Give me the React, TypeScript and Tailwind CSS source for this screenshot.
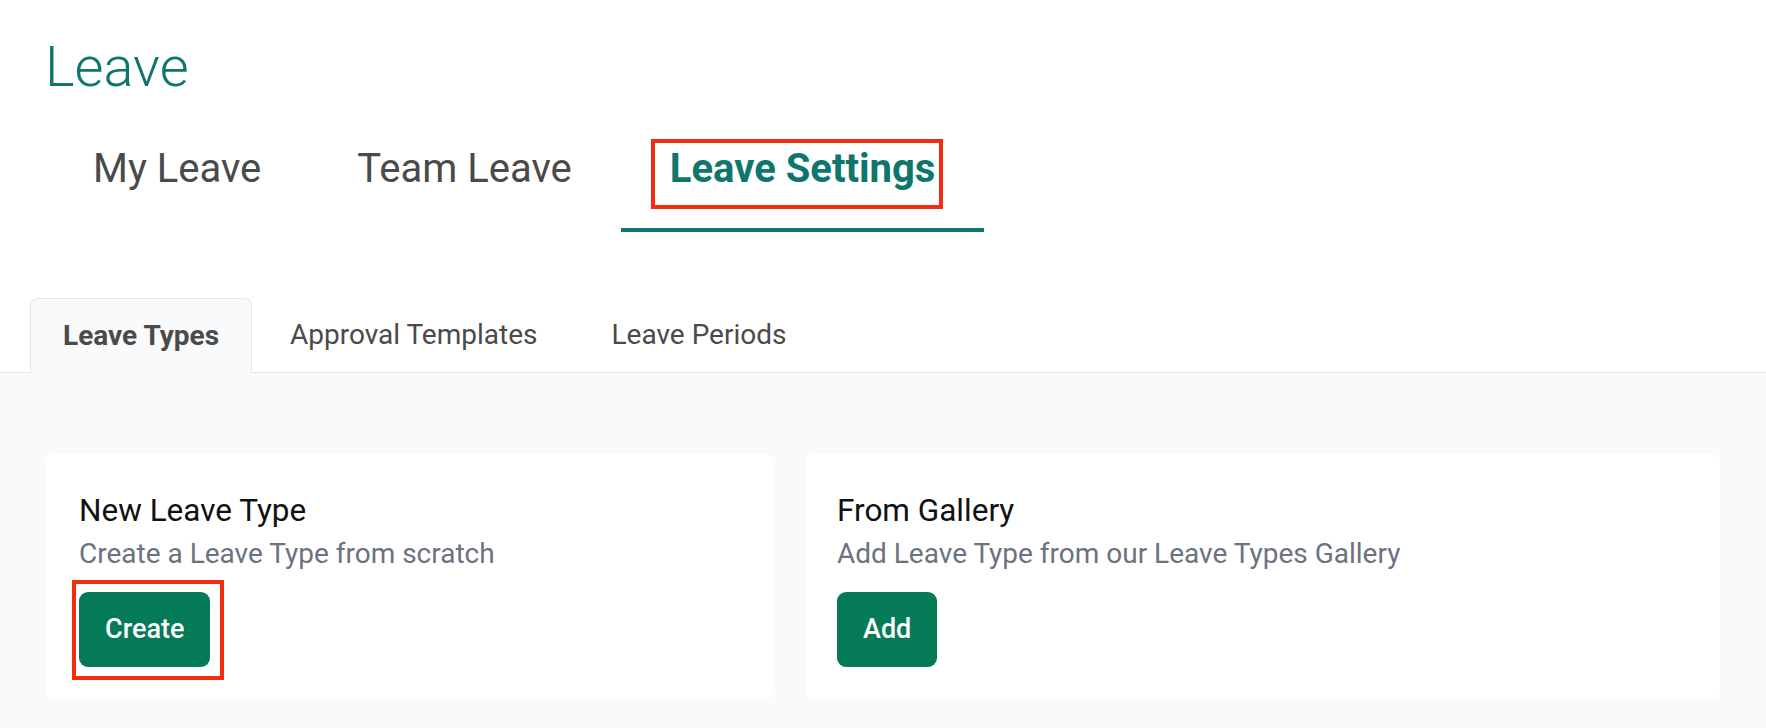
import React from "react";

export default function App() {
  return (
    <div className="w-full min-h-screen flex flex-col bg-white font-['Roboto',_'Liberation_Sans',_sans-serif]">
      {/* Title */}
      <div className="pt-[34px] pl-[45px]">
        <h1 className="text-[56px] leading-[67px] font-light text-[#0f766e]">Leave</h1>
      </div>

      {/* Main tabs */}
      <div className="flex ml-[42px] pt-[44px]">
        <div className="pl-[51px] pr-[47px] pb-[35px] border-b-4 border-transparent">
          <span className="text-[40px] leading-[48px] text-[#4a4a4a]">My Leave</span>
        </div>
        <div className="px-[49px] pb-[35px] border-b-4 border-transparent">
          <span className="text-[40px] leading-[48px] text-[#4a4a4a]">Team Leave</span>
        </div>
        <div className="px-[49px] pb-[35px] border-b-4 border-[#0f766e]">
          <span className="relative inline-block text-[40px] leading-[48px] font-bold text-[#0f766e]">
            Leave Settings
            <span className="absolute left-[-19px] right-[-8px] top-[-6px] bottom-[-16px] border-4 border-[#f52c0f]"></span>
          </span>
        </div>
      </div>

      {/* Sub tabs */}
      <div className="flex gap-[1px] pl-[30px] mt-[66px] h-[74px] relative z-10">
        <div className="h-[75px] -mb-px flex items-center px-[32px] bg-[#f9fafb] border border-b-0 border-[#e5e7eb] rounded-t-[8px]">
          <span className="text-[28px] font-bold text-[#4a4a4a] whitespace-nowrap">Leave Types</span>
        </div>
        <div className="h-[74px] flex items-center px-[37px]">
          <span className="text-[28px] text-[#4a4a4a] whitespace-nowrap">Approval Templates</span>
        </div>
        <div className="h-[74px] flex items-center px-[36px]">
          <span className="text-[28px] text-[#4a4a4a] whitespace-nowrap">Leave Periods</span>
        </div>
      </div>

      {/* Content */}
      <div className="flex-1 bg-[#f9fafb] border-t border-[#e5e7eb] pt-[81px] pl-[46px] pr-[46px] pb-[28px]">
        <div className="flex gap-[32px]">
          <div className="w-[727px] bg-white rounded-[9px] pt-[39px] pb-[32px] px-[33px]">
            <div className="text-[31.5px] leading-[36px] text-[#111111]">New Leave Type</div>
            <div className="mt-[7px] text-[28px] leading-[36px] text-[#6b7280]">Create a Leave Type from scratch</div>
            <div className="mt-[20px] flex">
              <button className="relative h-[75px] px-[26px] rounded-[9px] bg-[#057a57] text-white text-[27px] font-medium flex items-center justify-center">
                Create
                <span className="absolute left-[-7px] right-[-14px] top-[-12px] bottom-[-13px] border-4 border-[#f52c0f]"></span>
              </button>
            </div>
          </div>
          <div className="flex-1 bg-white rounded-[9px] pt-[39px] pb-[32px] px-[32px]">
            <div className="text-[31.5px] leading-[36px] text-[#111111]">From Gallery</div>
            <div className="mt-[7px] text-[28px] leading-[36px] text-[#6b7280]">Add Leave Type from our Leave Types Gallery</div>
            <div className="mt-[20px] flex">
              <button className="h-[75px] px-[26px] rounded-[9px] bg-[#057a57] text-white text-[27px] font-medium flex items-center justify-center">
                Add
              </button>
            </div>
          </div>
        </div>
      </div>
    </div>
  );
}
